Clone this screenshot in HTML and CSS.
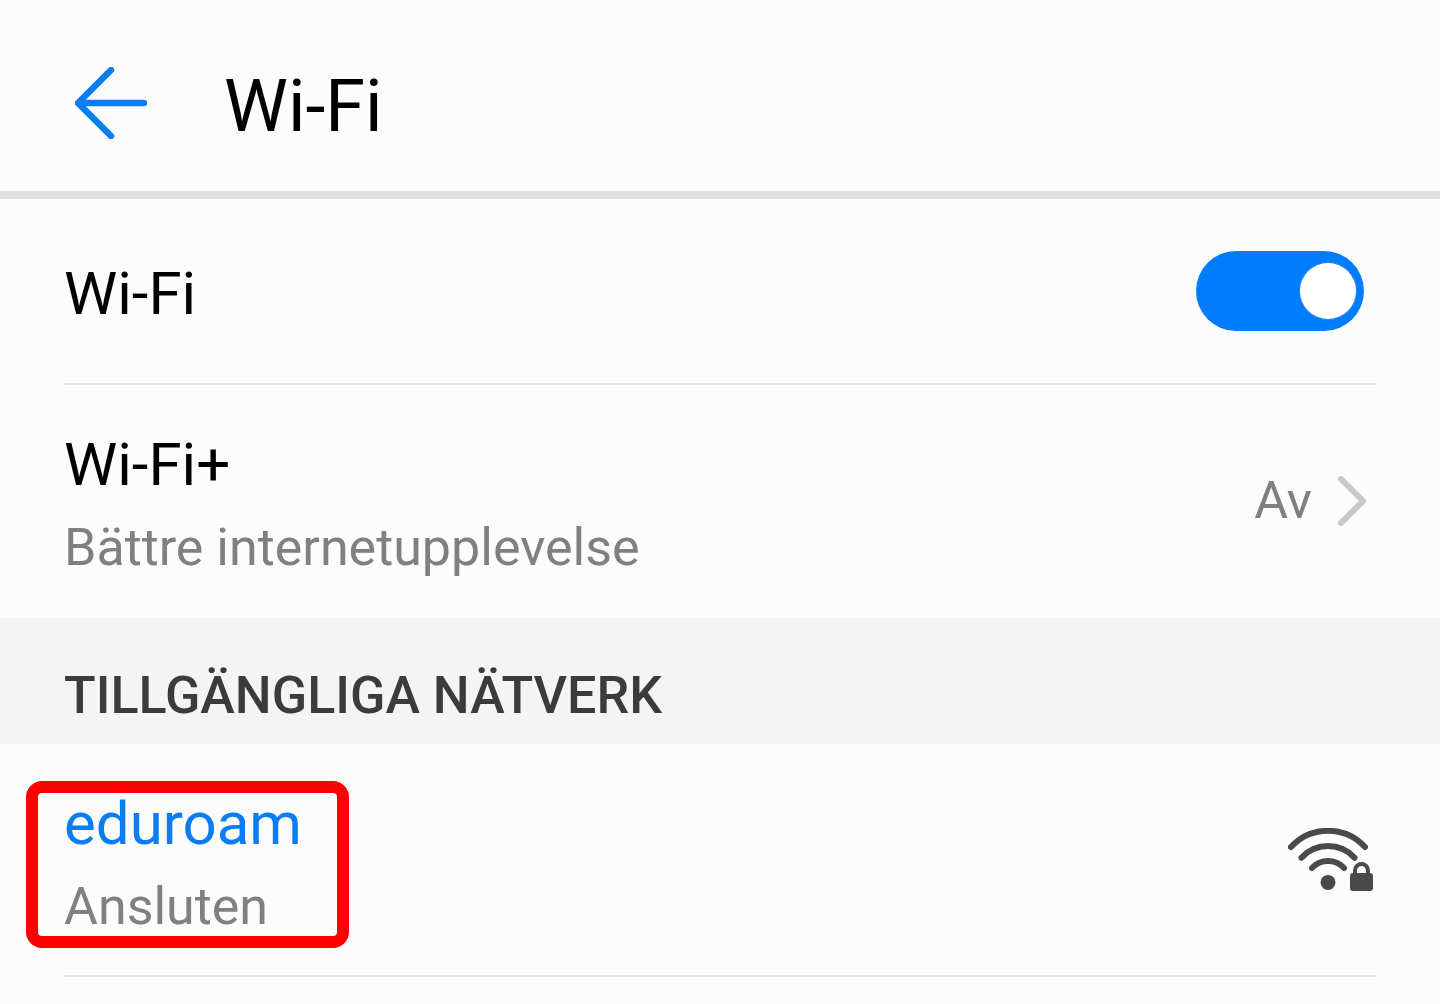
FILE: index.html
```html
<!DOCTYPE html>
<html lang="sv">
<head>
  <title>Wi-Fi</title>
  <meta charset="utf-8">
  <meta name="viewport" content="width=device-width, initial-scale=1.0">
  <link rel="stylesheet" href="styles.css">
</head>
<body>
  <header class="header">
    <button class="back" type="button" aria-label="Tillbaka">
      <svg width="72" height="72" viewBox="0 0 72 72"><path d="M36 3L3 36L36 69M4 36H69"/></svg>
    </button>
    <h1>Wi-Fi</h1>
  </header>
  <main>
    <div class="row">
      <label class="text single title" for="wifi">Wi-Fi</label>
      <input class="toggle" id="wifi" type="checkbox" role="switch" checked>
    </div>
    <a class="row last" href="#">
      <div class="text">
        <div class="title">Wi-Fi+</div>
        <div class="sub">Bättre internetupplevelse</div>
      </div>
      <div class="value">Av</div>
      <svg class="chevron" width="28" height="50" viewBox="0 0 28 50"><path d="M3 3L25 25L3 47"/></svg>
    </a>
    <h2 class="section">TILLGÄNGLIGA NÄTVERK</h2>
    <a class="row" href="#">
      <div class="text">
        <div class="title ssid">eduroam</div>
        <div class="sub">Ansluten</div>
      </div>
      <svg class="signal" width="86" height="64" viewBox="0 0 86 64">
        <path class="waves" d="M3 19A50.4 50.4 0 0 1 77 19M13.5 29.7A36 36 0 0 1 66.5 29.7M24 40A22 22 0 0 1 56 40"/>
        <circle cx="40" cy="54.4" r="7.5"/>
        <path class="shackle" d="M67 47V42.5A6.5 6.5 0 0 1 80 42.5V47"/>
        <rect x="62" y="45" width="23" height="18" rx="3"/>
      </svg>
      <span class="marker"></span>
    </a>
  </main>
</body>
</html>
```

FILE: styles.css
```css
body { margin: 0; background-color: #fcfcfc; color: #000; font-family: Roboto, "Liberation Sans", sans-serif; }
svg { display: block; flex: none; }
h1, h2 { margin: 0; }
.header {
  display: flex;
  align-items: flex-start;
  gap: 77px;
  padding: 65px 75px 42px;
  border-bottom: 8px solid #e0e0e0;
}
.header h1 { font-size: 72px; line-height: 84px; font-weight: 400; }
.back { display: flex; align-items: center; height: 76px; padding: 0; border: none; background: none; cursor: pointer; }
.back path { fill: none; stroke: #0a7df2; stroke-width: 6.5; stroke-linecap: round; stroke-linejoin: round; }
.row {
  position: relative;
  display: flex;
  align-items: center;
  margin: 0 64px;
  border-bottom: 2px solid #e4e4e4;
  color: inherit;
  text-decoration: none;
}
.row.last { border-bottom-color: transparent; }
.text { flex: 1; padding: 45px 0 38px; }
.text.single { padding: 60px 0 54px; }
.title { font-size: 60px; line-height: 70px; }
.sub { margin-top: 18px; font-size: 52px; line-height: 60px; color: #808080; }
.ssid { color: #0a7df2; }
.value { margin-right: 26px; font-size: 52px; line-height: 60px; color: #808080; }
.chevron { margin-right: 10px; }
.chevron path { fill: none; stroke: #c8c8c8; stroke-width: 6; stroke-linecap: round; stroke-linejoin: round; }
.toggle {
  appearance: none;
  display: flex;
  align-items: center;
  flex: none;
  box-sizing: border-box;
  width: 168px;
  height: 80px;
  margin: 0 12px 0 0;
  padding: 0 8px;
  border-radius: 40px;
  background-color: #c8c8c8;
  cursor: pointer;
}
.toggle::before { content: ""; width: 56px; height: 56px; border-radius: 50%; background-color: #fff; box-shadow: 0 0 0 1px #2e8cf5; }
.toggle:checked { justify-content: flex-end; background-color: #007dff; }
.section { padding: 48px 64px 18px; background-color: #f4f4f4; color: #3b3b3b; font-size: 52px; line-height: 60px; font-weight: 500; }
.signal { margin-right: 2px; fill: #4a4a4a; }
.signal path { fill: none; stroke: #4a4a4a; }
.signal .waves { stroke-width: 6; stroke-linecap: round; }
.signal .shackle { stroke-width: 4; }
/* red frame around the chosen network */
.marker {
  position: absolute;
  top: 37px;
  left: -38px;
  box-sizing: border-box;
  width: 323px;
  height: 167px;
  border: 12px solid #f00;
  border-radius: 16px;
  pointer-events: none;
}
```
